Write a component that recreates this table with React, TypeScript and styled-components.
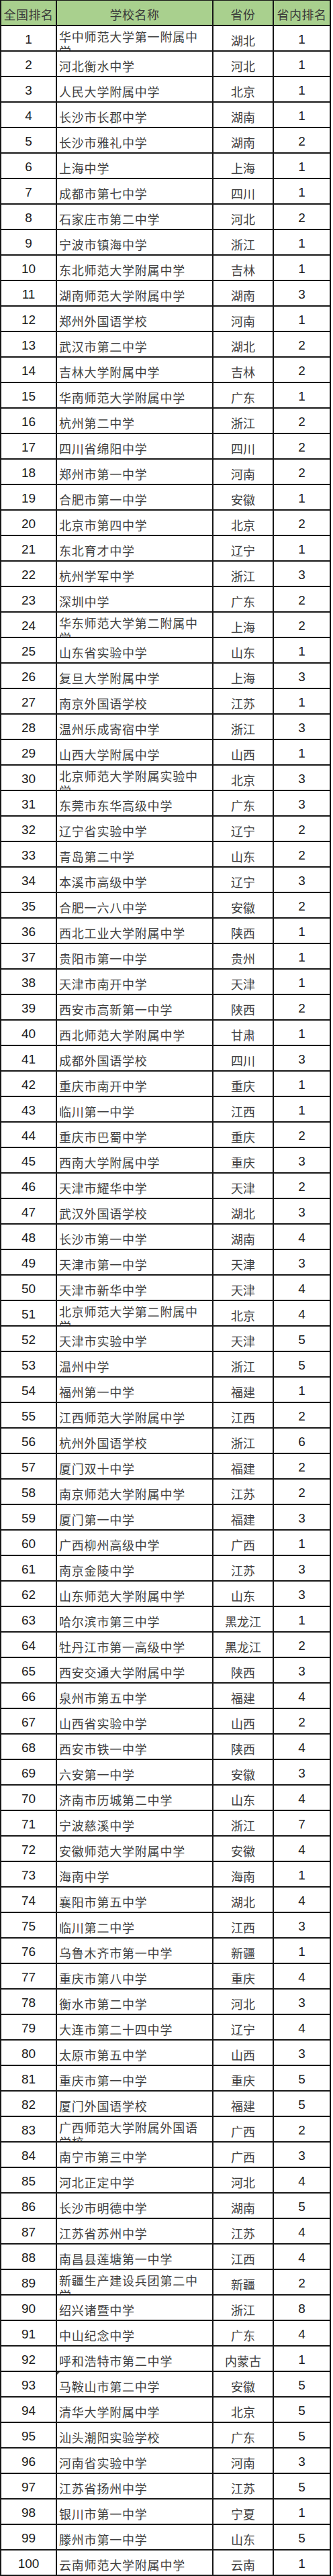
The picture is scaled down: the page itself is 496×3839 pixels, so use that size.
import React from "react";
import styled, { createGlobalStyle, css } from "styled-components";

const GlobalStyle = createGlobalStyle`
	html, body {
		margin: 0;
		padding: 0;
		background: #ffffff;
	}
	* {
		box-sizing: border-box;
	}
`;

type School = [number, string, string, number];

const schools: School[] = [
	[1, "华中师范大学第一附属中学", "湖北", 1],
	[2, "河北衡水中学", "河北", 1],
	[3, "人民大学附属中学", "北京", 1],
	[4, "长沙市长郡中学", "湖南", 1],
	[5, "长沙市雅礼中学", "湖南", 2],
	[6, "上海中学", "上海", 1],
	[7, "成都市第七中学", "四川", 1],
	[8, "石家庄市第二中学", "河北", 2],
	[9, "宁波市镇海中学", "浙江", 1],
	[10, "东北师范大学附属中学", "吉林", 1],
	[11, "湖南师范大学附属中学", "湖南", 3],
	[12, "郑州外国语学校", "河南", 1],
	[13, "武汉市第二中学", "湖北", 2],
	[14, "吉林大学附属中学", "吉林", 2],
	[15, "华南师范大学附属中学", "广东", 1],
	[16, "杭州第二中学", "浙江", 2],
	[17, "四川省绵阳中学", "四川", 2],
	[18, "郑州市第一中学", "河南", 2],
	[19, "合肥市第一中学", "安徽", 1],
	[20, "北京市第四中学", "北京", 2],
	[21, "东北育才中学", "辽宁", 1],
	[22, "杭州学军中学", "浙江", 3],
	[23, "深圳中学", "广东", 2],
	[24, "华东师范大学第二附属中学", "上海", 2],
	[25, "山东省实验中学", "山东", 1],
	[26, "复旦大学附属中学", "上海", 3],
	[27, "南京外国语学校", "江苏", 1],
	[28, "温州乐成寄宿中学", "浙江", 3],
	[29, "山西大学附属中学", "山西", 1],
	[30, "北京师范大学附属实验中学", "北京", 3],
	[31, "东莞市东华高级中学", "广东", 3],
	[32, "辽宁省实验中学", "辽宁", 2],
	[33, "青岛第二中学", "山东", 2],
	[34, "本溪市高级中学", "辽宁", 3],
	[35, "合肥一六八中学", "安徽", 2],
	[36, "西北工业大学附属中学", "陕西", 1],
	[37, "贵阳市第一中学", "贵州", 1],
	[38, "天津市南开中学", "天津", 1],
	[39, "西安市高新第一中学", "陕西", 2],
	[40, "西北师范大学附属中学", "甘肃", 1],
	[41, "成都外国语学校", "四川", 3],
	[42, "重庆市南开中学", "重庆", 1],
	[43, "临川第一中学", "江西", 1],
	[44, "重庆市巴蜀中学", "重庆", 2],
	[45, "西南大学附属中学", "重庆", 3],
	[46, "天津市耀华中学", "天津", 2],
	[47, "武汉外国语学校", "湖北", 3],
	[48, "长沙市第一中学", "湖南", 4],
	[49, "天津市第一中学", "天津", 3],
	[50, "天津市新华中学", "天津", 4],
	[51, "北京师范大学第二附属中学", "北京", 4],
	[52, "天津市实验中学", "天津", 5],
	[53, "温州中学", "浙江", 5],
	[54, "福州第一中学", "福建", 1],
	[55, "江西师范大学附属中学", "江西", 2],
	[56, "杭州外国语学校", "浙江", 6],
	[57, "厦门双十中学", "福建", 2],
	[58, "南京师范大学附属中学", "江苏", 2],
	[59, "厦门第一中学", "福建", 3],
	[60, "广西柳州高级中学", "广西", 1],
	[61, "南京金陵中学", "江苏", 3],
	[62, "山东师范大学附属中学", "山东", 3],
	[63, "哈尔滨市第三中学", "黑龙江", 1],
	[64, "牡丹江市第一高级中学", "黑龙江", 2],
	[65, "西安交通大学附属中学", "陕西", 3],
	[66, "泉州市第五中学", "福建", 4],
	[67, "山西省实验中学", "山西", 2],
	[68, "西安市铁一中学", "陕西", 4],
	[69, "六安第一中学", "安徽", 3],
	[70, "济南市历城第二中学", "山东", 4],
	[71, "宁波慈溪中学", "浙江", 7],
	[72, "安徽师范大学附属中学", "安徽", 4],
	[73, "海南中学", "海南", 1],
	[74, "襄阳市第五中学", "湖北", 4],
	[75, "临川第二中学", "江西", 3],
	[76, "乌鲁木齐市第一中学", "新疆", 1],
	[77, "重庆市第八中学", "重庆", 4],
	[78, "衡水市第二中学", "河北", 3],
	[79, "大连市第二十四中学", "辽宁", 4],
	[80, "太原市第五中学", "山西", 3],
	[81, "重庆市第一中学", "重庆", 5],
	[82, "厦门外国语学校", "福建", 5],
	[83, "广西师范大学附属外国语学校", "广西", 2],
	[84, "南宁市第三中学", "广西", 3],
	[85, "河北正定中学", "河北", 4],
	[86, "长沙市明德中学", "湖南", 5],
	[87, "江苏省苏州中学", "江苏", 4],
	[88, "南昌县莲塘第一中学", "江西", 4],
	[89, "新疆生产建设兵团第二中学", "新疆", 2],
	[90, "绍兴诸暨中学", "浙江", 8],
	[91, "中山纪念中学", "广东", 4],
	[92, "呼和浩特市第二中学", "内蒙古", 1],
	[93, "马鞍山市第二中学", "安徽", 5],
	[94, "清华大学附属中学", "北京", 5],
	[95, "汕头潮阳实验学校", "广东", 5],
	[96, "河南省实验中学", "河南", 3],
	[97, "江苏省扬州中学", "江苏", 5],
	[98, "银川市第一中学", "宁夏", 1],
	[99, "滕州市第一中学", "山东", 5],
	[100, "云南师范大学附属中学", "云南", 1],
];

const cjk = `"Noto Sans CJK SC", "Noto Sans", sans-serif`;

export const Table = styled.div`
	display: flex;
	flex-direction: column;
	gap: 2px;
	width: 493px;
	padding: 1px 2px 2px 2px;
	background: #161616;
`;

export const Row = styled.div`
	display: grid;
	grid-template-columns: 81px 231px 88px 83px;
	gap: 2px;
	height: 36px;
`;

export const HeadCell = styled.div`
	display: flex;
	align-items: center;
	justify-content: center;
	padding-top: 3px;
	background: #a9d08e;
	color: #3a3a3a;
	font-family: ${cjk};
	font-size: 18px;
	letter-spacing: 0.5px;
	white-space: nowrap;
	overflow: hidden;
`;

export const RankCell = styled.div`
	display: flex;
	align-items: center;
	justify-content: center;
	padding-top: 3px;
	background: #ffffff;
	color: #1c1c1c;
	font-family: "Liberation Sans", Arial, sans-serif;
	font-size: 19px;
`;

export const NameCell = styled.div<{ $wrapped: boolean; $marked?: boolean }>`
	position: relative;
	display: flex;
	align-items: ${(p) => (p.$wrapped ? "flex-start" : "center")};
	padding: ${(p) => (p.$wrapped ? "4px 12px 0 3px" : "5px 12px 0 3px")};
	background: #ffffff;
	color: #404040;
	font-family: ${cjk};
	font-size: 18px;
	line-height: 22px;
	letter-spacing: 0.8px;
	overflow: hidden;

	${(p) =>
		p.$marked &&
		css`
			&::before {
				content: "";
				position: absolute;
				top: 0;
				left: 0;
				border-top: 4px solid #444;
				border-right: 4px solid transparent;
			}
		`}
`;

export const ProvinceCell = styled.div`
	display: flex;
	align-items: center;
	justify-content: center;
	padding-top: 5px;
	background: #ffffff;
	color: #404040;
	font-family: ${cjk};
	font-size: 18px;
	white-space: nowrap;
`;

const App = () => {
	return (
		<>
			<GlobalStyle />
			<Table>
				<Row>
					<HeadCell>全国排名</HeadCell>
					<HeadCell>学校名称</HeadCell>
					<HeadCell>省份</HeadCell>
					<HeadCell>省内排名</HeadCell>
				</Row>
				{schools.map(([rank, name, province, local]) => (
					<Row key={rank}>
						<RankCell>{rank}</RankCell>
						<NameCell $wrapped={name.length > 11} $marked={rank === 93}>
							<span>{name}</span>
						</NameCell>
						<ProvinceCell>{province}</ProvinceCell>
						<RankCell>{local}</RankCell>
					</Row>
				))}
			</Table>
		</>
	);
};

export default App;
